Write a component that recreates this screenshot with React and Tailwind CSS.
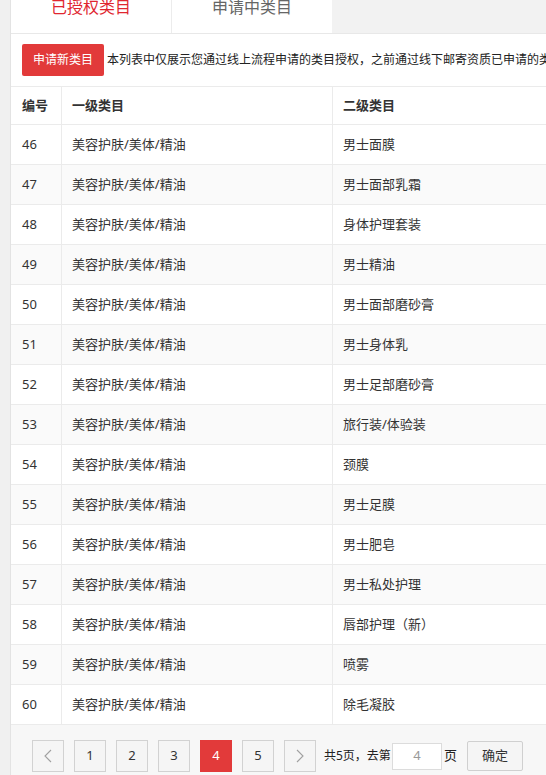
import { useState } from "react";

const rows = [
  [46, "男士面膜"],
  [47, "男士面部乳霜"],
  [48, "身体护理套装"],
  [49, "男士精油"],
  [50, "男士面部磨砂膏"],
  [51, "男士身体乳"],
  [52, "男士足部磨砂膏"],
  [53, "旅行装/体验装"],
  [54, "颈膜"],
  [55, "男士足膜"],
  [56, "男士肥皂"],
  [57, "男士私处护理"],
  [58, "唇部护理（新）"],
  [59, "喷雾"],
  [60, "除毛凝胶"],
];

function Chevron({ dir }) {
  return (
    <svg width="8" height="14" viewBox="0 0 8 14" fill="none">
      {dir === "left" ? (
        <polyline points="7,1 1,7 7,13" stroke="#a0a0a0" strokeWidth="1.1" />
      ) : (
        <polyline points="1,1 7,7 1,13" stroke="#a0a0a0" strokeWidth="1.1" />
      )}
    </svg>
  );
}

function PageBtn({ children, active }) {
  return (
    <button
      className={
        active
          ? "w-[32px] h-[32px] flex items-center justify-center bg-[#e23a3a] border border-[#e23a3a] text-white text-[13px]"
          : "w-[32px] h-[32px] flex items-center justify-center bg-[#f5f5f5] border border-[#d2d2d2] text-[#333] text-[13px]"
      }
    >
      {children}
    </button>
  );
}

export default function App() {
  const [tab, setTab] = useState(0);

  return (
    <div className="h-[775px] w-full overflow-hidden bg-[#f0f0f0] pl-[10px] flex font-['Noto_Sans','Noto_Sans_CJK_SC',sans-serif] text-[#333]">
      <div className="flex-1 min-w-0 flex flex-col border-l border-[#e3e3e3] overflow-hidden">
        {/* tabs */}
        <div className="h-[33px] flex shrink-0 bg-[#f2f2f2]">
          <div
            onClick={() => setTab(0)}
            className={
              "w-[160px] bg-white flex justify-center text-[16px] leading-[16px] " +
              (tab === 0 ? "text-[#e0262f]" : "text-[#666]")
            }
          >
            <span className="-mt-[1px]">已授权类目</span>
          </div>
          <div
            onClick={() => setTab(1)}
            className={
              "w-[161px] bg-white border-l border-[#ececec] flex justify-center text-[16px] leading-[16px] " +
              (tab === 1 ? "text-[#e0262f]" : "text-[#666]")
            }
          >
            <span className="-mt-[1px]">申请中类目</span>
          </div>
        </div>

        <div className="flex-1 flex flex-col border-t border-[#e8e8e8] bg-white">
          {/* top bar */}
          <div className="flex items-center pl-[11px] pt-[10px] pb-[10px] whitespace-nowrap overflow-hidden">
            <button className="h-[32px] w-[82px] shrink-0 rounded-[2px] bg-[#e23a3a] text-white text-[12px] leading-[32px]">
              申请新类目
            </button>
            <span className="ml-[3px] text-[12px] text-[#222]">
              本列表中仅展示您通过线上流程申请的类目授权，之前通过线下邮寄资质已申请的类目授权请点击查看
            </span>
          </div>

          {/* table */}
          <div className="text-[13px]">
            <div className="flex h-[39px] border-y border-[#ebebeb] font-semibold">
              <div className="w-[51px] shrink-0 border-r border-[#ebebeb] pl-[11px] flex items-center">
                编号
              </div>
              <div className="w-[271px] shrink-0 border-r border-[#ebebeb] pl-[10px] flex items-center">
                一级类目
              </div>
              <div className="flex-1 pl-[10px] flex items-center">二级类目</div>
            </div>
            {rows.map(([id, name], i) => (
              <div
                key={id}
                className={
                  "flex h-[40px] border-b border-[#ebebeb] " +
                  (i % 2 === 1 ? "bg-[#fafafa]" : "bg-white")
                }
              >
                <div className="w-[51px] shrink-0 border-r border-[#ebebeb] pl-[11px] flex items-center">
                  {id}
                </div>
                <div className="w-[271px] shrink-0 border-r border-[#ebebeb] pl-[10px] flex items-center">
                  美容护肤/美体/精油
                </div>
                <div className="flex-1 pl-[10px] flex items-center">{name}</div>
              </div>
            ))}
          </div>

          {/* pagination */}
          <div className="flex-1 bg-[#f7f7f7] pt-[15px] pl-[21px] flex items-start whitespace-nowrap">
            <div className="flex items-center gap-[10px]">
              <PageBtn>
                <Chevron dir="left" />
              </PageBtn>
              <PageBtn>1</PageBtn>
              <PageBtn>2</PageBtn>
              <PageBtn>3</PageBtn>
              <PageBtn active>4</PageBtn>
              <PageBtn>5</PageBtn>
              <PageBtn>
                <Chevron dir="right" />
              </PageBtn>
            </div>
            <div className="flex items-center h-[32px] ml-[8px] text-[12px] text-[#222]">
              <span>共5页，去第</span>
              <div className="w-[50px] h-[27px] bg-white border border-[#dcdcdc] flex items-center justify-center text-[13px] text-[#999] ml-[1px]">
                4
              </div>
              <span className="ml-[2px] text-[13px]">页</span>
              <button className="ml-[10px] w-[56px] h-[30px] bg-[#f5f5f5] border border-[#d0d0d0] rounded-[2px] text-[13px] text-[#333]">
                确定
              </button>
            </div>
          </div>
        </div>
      </div>
    </div>
  );
}
